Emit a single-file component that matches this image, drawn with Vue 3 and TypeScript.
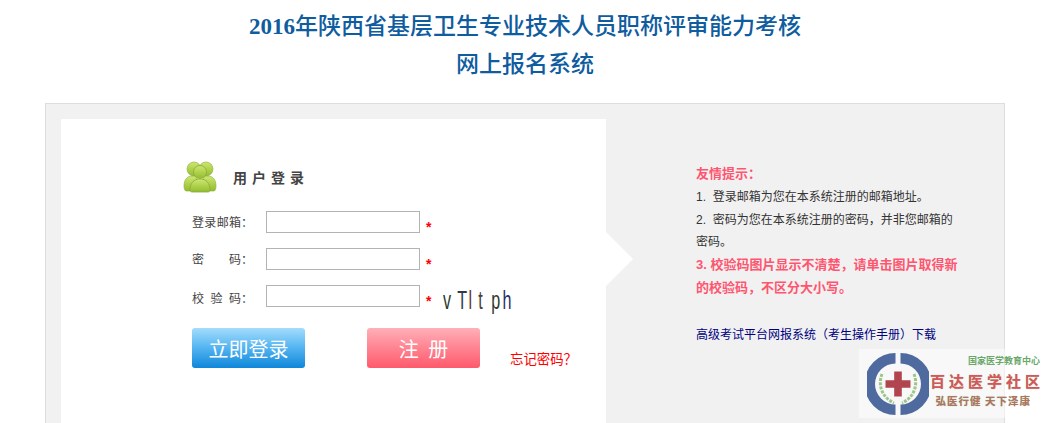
<script setup lang="ts">
// 登录页:标题 + 灰底容器(左白色表单面板,右侧提示)
// 全角标点在模板里用实体写:&#xFF1A; 冒号,&#xFF0C; 逗号,&#xFF08;&#xFF09; 括号,&#xFF1F; 问号
const fields = [
  { chars: ['登', '录', '邮', '箱'], withCaptcha: false },
  { chars: ['密', '码'], withCaptcha: false },
  { chars: ['校', '验', '码'], withCaptcha: true },
]

// width 是字符的步进(放大前),容器再横向压缩 .62
const captcha = [
  { ch: 'v', color: '#2c3a2c', width: 23 },
  { ch: 'T', color: '#2e3a4a', width: 18 },
  { ch: 'l', color: '#5a3a30', width: 16 },
  { ch: 't', color: '#4a4038', width: 21 },
  { ch: 'p', color: '#33372c', width: 18 },
  { ch: 'h', color: '#26306a', width: 18 },
]
</script>

<template>
  <div class="page">
    <header class="title">
      <h1><span class="num">2016</span>年陕西省基层卫生专业技术人员职称评审能力考核</h1>
      <h1>网上报名系统</h1>
    </header>

    <main class="box">
      <section class="panel">
        <div class="head">
          <svg class="users" width="34" height="32" viewBox="0 0 34 32">
            <defs>
              <linearGradient id="ug" x1="0" x2="0" y1="0" y2="1">
                <stop offset="0" stop-color="#cde76f" />
                <stop offset="1" stop-color="#93bd2e" />
              </linearGradient>
            </defs>
            <circle cx="11" cy="8" r="7" fill="url(#ug)" stroke="#8aaa3a" stroke-width=".6" />
            <circle cx="23" cy="8" r="7" fill="url(#ug)" stroke="#8aaa3a" stroke-width=".6" />
            <path d="M1 25c0-6 3-10 8-10h5v15H3c-1 0-2-2-2-5z" fill="url(#ug)" stroke="#8aaa3a" stroke-width=".6" />
            <path d="M33 25c0-6-3-10-8-10h-5v15h11c1 0 2-2 2-5z" fill="url(#ug)" stroke="#8aaa3a" stroke-width=".6" />
            <circle cx="17" cy="11" r="6.500" fill="url(#ug)" stroke="#8aaa3a" stroke-width=".8" />
            <path d="M7 29c0-7 4-11 10-11s10 4 10 11c0 1-1 2-2 2H9c-1 0-2-1-2-2z" fill="url(#ug)" stroke="#8aaa3a" stroke-width=".8" />
          </svg>
          <h2>用户登录</h2>
        </div>

        <div class="fields">
          <div v-for="(f, i) in fields" :key="i" class="row">
            <label class="label">
              <span class="chars"><span v-for="c in f.chars" :key="c">{{ c }}</span></span>&#xFF1A;
            </label>
            <input class="input" type="text" />
            <span class="star">*</span>
            <div v-if="f.withCaptcha" class="captcha">
              <span v-for="c in captcha" :key="c.ch" :style="{ color: c.color, width: `${c.width}px` }">{{ c.ch }}</span>
            </div>
          </div>
        </div>

        <div class="actions">
          <button class="btn login" type="button">立即登录</button>
          <button class="btn reg" type="button">注 册</button>
          <a class="forgot">忘记密码&#xFF1F;</a>
        </div>
      </section>

      <span class="arrow"></span>

      <aside class="tips">
        <p class="hot">友情提示&#xFF1A;</p>
        <p>1.&nbsp;&nbsp;登录邮箱为您在本系统注册的邮箱地址。</p>
        <p>2.&nbsp;&nbsp;密码为您在本系统注册的密码&#xFF0C;并非您邮箱的密码。</p>
        <p class="hot">3. 校验码图片显示不清楚&#xFF0C;请单击图片取得新的校验码&#xFF0C;不区分大小写。</p>
        <p class="link">高级考试平台网报系统&#xFF08;考生操作手册&#xFF09;下载</p>
      </aside>
    </main>

    <div class="logo">
      <svg width="62" height="62" viewBox="0 0 62 62">
        <path d="M28.500 0a31 31 0 0 0 0 62V51.500a20.500 20.500 0 0 1 0-41z" fill="#4f6a9f" />
        <path d="M33.500 0a31 31 0 0 1 0 62V51.500a20.500 20.500 0 0 0 0-41z" fill="#4f6a9f" />
        <path d="M15 21c-4 10-1 23 12 29M47 21c4 10 1 23-12 29" fill="none" stroke="#9cc58a" stroke-width="3" stroke-dasharray="3 1.200" />
        <path d="M27.200 18.500h7.600v8.700h8.700v7.600h-8.700v8.700h-7.600v-8.700h-8.700v-7.600h8.700z" fill="#b0444f" />
      </svg>
      <div class="logo-text">
        <div class="l1">国家医学教育中心</div>
        <div class="l2">百达医学社区</div>
        <div class="l3">弘医行健 天下泽康</div>
      </div>
    </div>
  </div>
</template>

<style scoped>
.page {
  position: relative;
  height: 423px;
  overflow: hidden;
  font-family: "Liberation Sans", "Noto Sans CJK SC", sans-serif;
  font-size: 12px;
  color: #333;
}
.title {
  padding-top: 8px;
  height: 95px;
  box-sizing: border-box;
  width: 960px;
  margin-left: 45px;
  text-align: center;
}
.title h1 {
  margin: 0;
  font-family: "Liberation Serif", "Noto Sans CJK SC", serif;
  font-size: 23px;
  line-height: 38px;
  font-weight: 500;
  color: #0f5c9f;
}
.num {
  font-weight: 700;
}
.box {
  position: relative;
  margin: 8px 0 0 45px;
  width: 960px;
  height: 400px;
  box-sizing: border-box;
  padding: 15px 0 0 15px;
  display: flex;
  background: #f1f1f1;
  border: 1px solid #ddd;
}
.panel {
  width: 545px;
  height: 400px;
  padding: 42px 0 0 131px;
  box-sizing: border-box;
  background: #fff;
}
.arrow {
  position: absolute;
  left: 560px;
  top: 128px;
  border-left: 27px solid #fff;
  border-top: 27px solid transparent;
  border-bottom: 27px solid transparent;
}
.head {
  display: flex;
  align-items: center;
  margin-left: -9px;
  height: 32px;
  margin-bottom: 18px;
}
.head h2 {
  margin: 0 0 0 16px;
  font-size: 14px;
  font-weight: 700;
  letter-spacing: 5px;
  color: #444;
}
.fields {
  display: flex;
  flex-direction: column;
  gap: 15px;
}
.row {
  display: flex;
  align-items: flex-start;
  height: 22px;
}
.label {
  display: flex;
  width: 74px;
  line-height: 24px;
  color: #444;
}
.row:last-child .label {
  padding-top: 2px;
}
.chars {
  display: flex;
  justify-content: space-between;
  width: 49px;
}
.input {
  width: 154px;
  height: 22px;
  padding: 0;
  box-sizing: border-box;
  border: 1px solid #b3b3b3;
  background: #fff;
  outline: none;
}
.star {
  margin-left: 6px;
  color: #f00;
  font-size: 14px;
  font-weight: 700;
  line-height: 24px;
  padding-top: 4px;
}
.captcha {
  display: flex;
  flex: none;
  width: 115px;
  height: 30px;
  margin-left: 12px;
  font-family: "Liberation Sans", sans-serif;
  font-size: 26px;
  line-height: 30px;
  transform: scaleX(.62);
  transform-origin: left center;
}
.actions {
  display: flex;
  align-items: flex-start;
  margin-top: 21px;
}
.btn {
  width: 113px;
  height: 40px;
  border: 0;
  padding: 0;
  border-radius: 3px;
  font-family: inherit;
  font-size: 20px;
  color: #fff;
}
.login {
  background: linear-gradient(180deg, #a4dcfc 0%, #5ab8f2 45%, #0e87da 100%);
}
.reg {
  margin-left: 62px;
  word-spacing: 4px;
  background: linear-gradient(180deg, #ffb0b8 0%, #ff8391 50%, #ff5a6c 100%);
}
.forgot {
  margin: 21px 0 0 30px;
  font-size: 13.400px;
  line-height: 22px;
  color: #f00;
  white-space: nowrap;
}
.tips {
  width: 263px;
  margin: 44px 0 0 90px;
  line-height: 22.800px;
  color: #333;
}
.tips p {
  margin: 0;
}
.tips .hot {
  color: #ff5570;
  font-size: 13px;
  font-weight: 700;
}
.tips .link {
  margin-top: 24px;
  color: #000080;
  white-space: nowrap;
}
.logo {
  position: absolute;
  left: 859px;
  top: 349px;
  width: 181px;
  height: 69px;
  display: flex;
  align-items: center;
  padding-left: 8px;
  box-sizing: border-box;
  background: rgba(255, 255, 255, .5);
}
.logo-text {
  flex: 1;
  margin: -5px 0 0 -1px;
  text-align: right;
  font-weight: 700;
  font-family: "Noto Sans CJK SC", sans-serif;
  white-space: nowrap;
}
.l1 {
  font-size: 9px;
  line-height: 20px;
  color: #6aa86a;
}
.l2 {
  font-size: 15px;
  line-height: 20px;
  letter-spacing: 4px;
  margin-right: -4px;
  color: #d9555a;
  text-shadow: 0 0 1px #8fcf9a;
}
.l3 {
  font-size: 10.500px;
  line-height: 20px;
  letter-spacing: 1px;
  margin-right: 9px;
  color: #b5705f;
  text-shadow: 0 0 1px #8fcf9a;
}
</style>

<style>
html, body {
  margin: 0;
  overflow: hidden;
  background: #fff;
}
</style>
